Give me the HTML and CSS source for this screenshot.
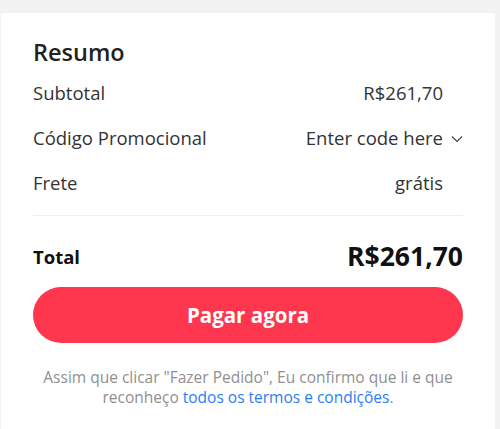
FILE: index.html
```html
<!DOCTYPE html>
<html lang="pt">
<head>
    <meta charset="UTF-8">
    <meta name="viewport" content="width=device-width, initial-scale=1.0">
    <title>Resumo</title>
    <link rel="stylesheet" href="styles.css">
</head>
<body>
    <div class="summary">
        <h2>Resumo</h2>

        <div class="row">
            <span>Subtotal</span>
            <span class="value">R$261,70</span>
        </div>
        <div class="row">
            <span>Código Promocional</span>
            <span class="value promo">Enter code here
                <svg class="chevron" width="12" height="8" viewBox="0 0 12 8">
                    <path d="M1 1.5 L6 6.5 L11 1.5" fill="none" stroke="#444" stroke-width="1.2"/>
                </svg>
            </span>
        </div>
        <div class="row">
            <span>Frete</span>
            <span class="value">grátis</span>
        </div>

        <div class="total">
            <span class="total-label">Total</span>
            <span class="total-value">R$261,70</span>
        </div>

        <button class="pay">Pagar agora</button>

        <p class="terms">Assim que clicar "Fazer Pedido", Eu confirmo que li e que<br>reconheço <a href="#">todos os termos e condições</a>.</p>
    </div>
</body>
</html>
```

FILE: styles.css
```css
body {
    margin: 0;
    padding: 13px 5px 0 1px;
    background-color: #f2f2f2;
    font-family: "Open Sans", Arial, sans-serif;
    color: #333;
}
.summary {
    background-color: #fff;
    border-radius: 3px;
    padding: 25px 32px 40px;
}
h2 {
    margin: 0 0 4px;
    font-size: 23.5px;
    font-weight: 600;
    color: #222;
    line-height: 28px;
}
.row {
    display: flex;
    justify-content: space-between;
    align-items: center;
    height: 45px;
    font-size: 18.5px;
}
.value {
    padding-right: 20px;
}
.promo {
    position: relative;
}
.chevron {
    position: absolute;
    right: 0;
    top: 10px;
}
.total {
    display: flex;
    justify-content: space-between;
    align-items: center;
    border-top: 1px solid #eee;
    margin-top: 10px;
    padding-top: 22px;
    height: 36px;
    color: #111;
}
.total-label {
    font-size: 18.5px;
    font-weight: 700;
}
.total-value {
    font-size: 26.5px;
    font-weight: 700;
}
.pay {
    display: block;
    width: 100%;
    height: 56px;
    margin-top: 13px;
    border: none;
    border-radius: 28px;
    background-color: #fe364e;
    color: #fff;
    font-family: inherit;
    font-size: 20.5px;
    font-weight: 700;
    cursor: pointer;
}
.terms {
    margin: 24px 0 0;
    text-align: center;
    font-size: 15.5px;
    line-height: 20px;
    color: #8f8f8f;
}
.terms a {
    color: #2b7ef8;
    text-decoration: none;
}
```
